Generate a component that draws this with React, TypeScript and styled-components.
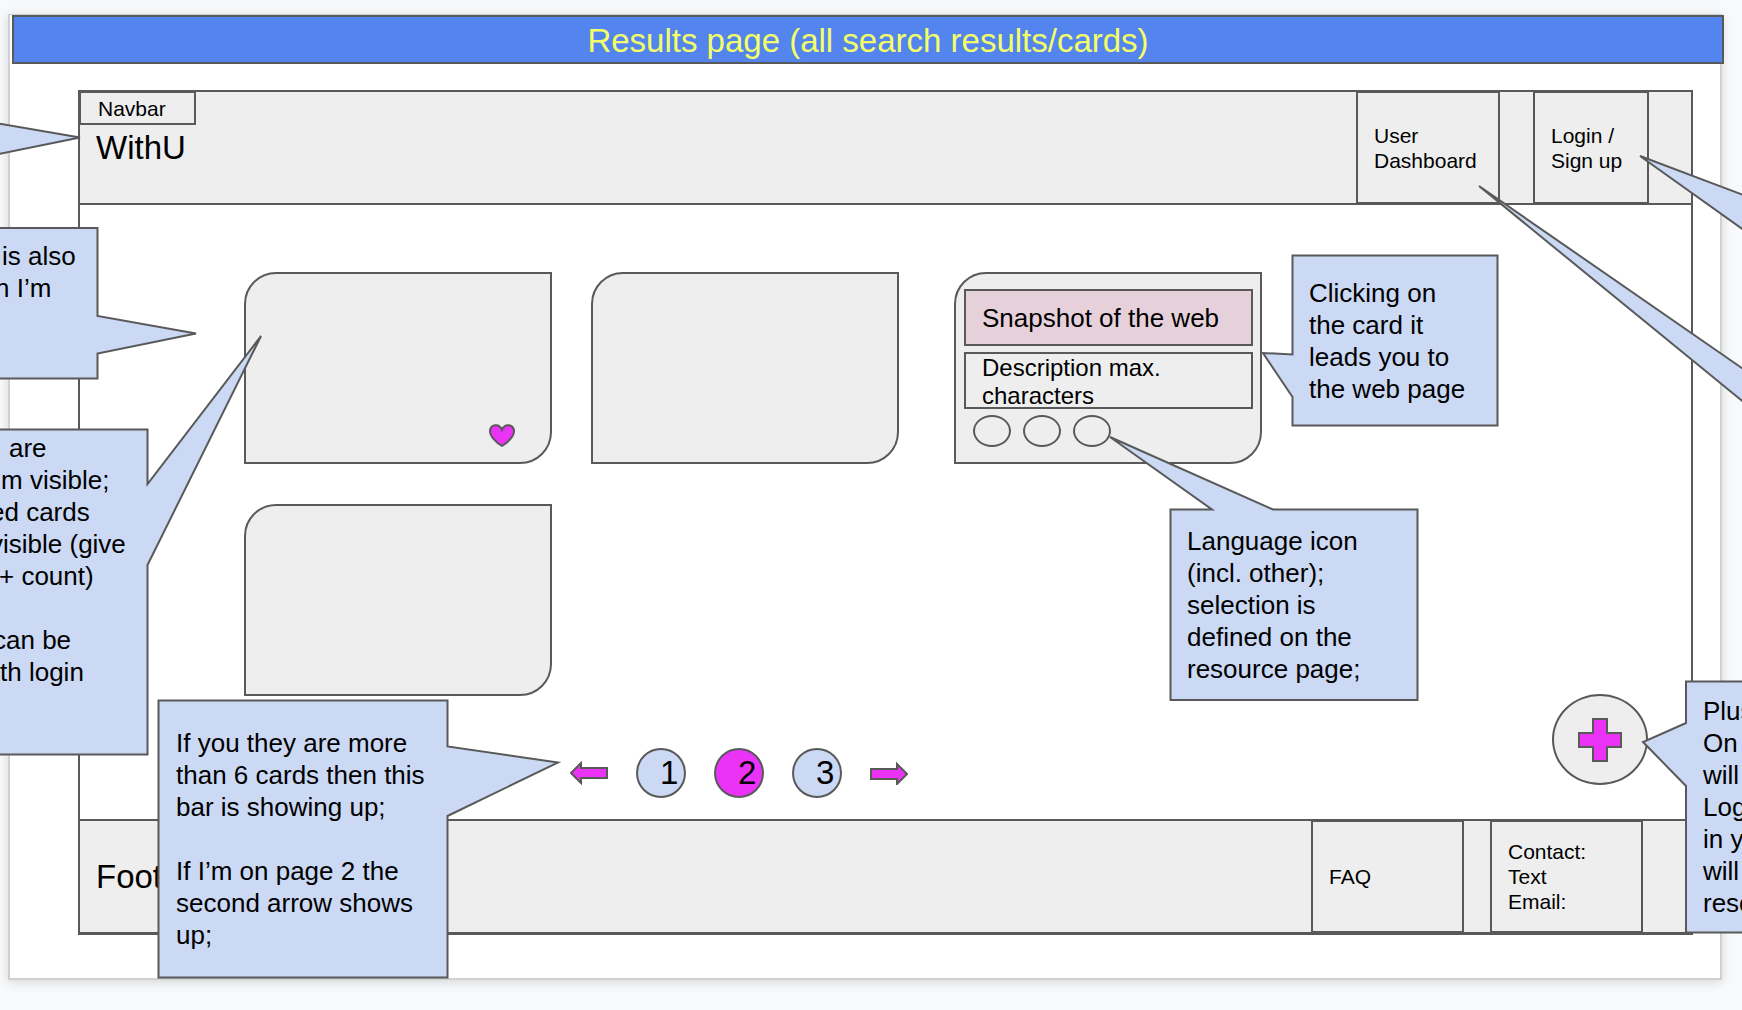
import React from "react";
import styled, { createGlobalStyle, css } from "styled-components";

const line = "#595959";
const grey = "#eeeeee";
const blue = "#cbd9f4";
const magenta = "#ea33f7";

const GlobalStyle = createGlobalStyle`
  *, *::before, *::after { box-sizing: border-box; }
  body {
    margin: 0;
    background: #f8f9fb;
    color: #000;
    font-family: "Liberation Sans", Arial, Helvetica, sans-serif;
  }
  h1, p, ul { margin: 0; padding: 0; font-weight: 400; }
  button { font: inherit; color: inherit; padding: 0; cursor: pointer; }
  a { color: inherit; text-decoration: none; }
`;

const Page = styled.div`
  position: relative;
  min-height: 100vh;
  overflow: hidden;
  padding: 14px 20px 30px 8px;
`;

const Sheet = styled.div`
  background: #fff;
  border: 2px solid #d0d0d0;
  border-top-width: 1px;
  box-shadow: 0 2px 10px rgba(0, 0, 0, 0.14);
  padding-bottom: 43px;
`;

const Title = styled.h1`
  && { padding-top: 2px; }
  margin: 0 -4px 0 2px;
  height: 49px;
  display: flex;
  align-items: center;
  justify-content: center;
  background: #5484ed;
  border: 2px solid ${line};
  color: #f3ff68;
  font-size: 33px;
  line-height: 38px;
`;

const Frame = styled.div`
  margin: 26px 27px 0 68px;
  border: 2px solid ${line};
  border-bottom-width: 3px;
`;

const bar = css`
  display: flex;
  align-items: center;
  height: 113px;
  padding-left: 16px;
  background: ${grey};
  font-size: 33px;
  line-height: 38px;
`;

const Header = styled.header`
  ${bar}
  position: relative;
  border-bottom: 2px solid ${line};
`;

const Footer = styled.footer`
  ${bar}
  border-top: 2px solid ${line};
`;

const Tag = styled.span`
  position: absolute;
  left: 0;
  top: 0;
  width: 116px;
  padding: 3px 0 2px 17px;
  border: solid ${line};
  border-width: 1px 2px 2px 1px;
  font-size: 21px;
  line-height: 25px;
`;

const Brand = styled.span`
  flex: 1;
`;

const Tabs = styled.nav<{ $gap: number; $end: number }>`
  display: flex;
  align-self: stretch;
  gap: ${(p) => p.$gap}px;
  margin-right: ${(p) => p.$end}px;
`;

const Tab = styled.a<{ $width: number }>`
  display: flex;
  align-items: center;
  width: ${(p) => p.$width}px;
  padding: 0 16px;
  border: solid ${line};
  border-width: 1px 2px;
  font-size: 21px;
  line-height: 25px;
  white-space: pre-line;
`;

const Main = styled.main`
  padding: 67px 43px 21px 164px;
`;

const Cards = styled.div`
  display: grid;
  grid-template-columns: 347px 363px 308px;
  row-gap: 40px;
`;

const Card = styled.article`
  width: 308px;
  height: 192px;
  display: flex;
  flex-direction: column;
  gap: 6px;
  padding: 15px 7px 0 8px;
  background: ${grey};
  border: 2px solid ${line};
  border-radius: 32px 0 32px 0;
`;

const Favourite = styled.button`
  margin: auto 28px 15px auto;
  height: 23px;
  border: 0;
  background: none;
`;

const Snapshot = styled.div`
  height: 57px;
  padding-left: 16px;
  border: 2px solid ${line};
  background: #e6d1db;
  font-size: 26px;
  line-height: 54px;
`;

const Description = styled.p`
  && { padding-left: 16px; }
  height: 57px;
  border: 2px solid ${line};
  font-size: 24px;
  line-height: 28px;
`;

const Languages = styled.ul`
  display: flex;
  gap: 12px;
  && { padding-left: 9px; }
  list-style: none;
`;

const Language = styled.li`
  width: 38px;
  height: 32px;
  border: 2px solid ${line};
  border-radius: 50%;
`;

const Bottom = styled.div`
  display: flex;
  justify-content: space-between;
  align-items: flex-end;
  margin-top: -2px;
  padding-left: 326px;
`;

const Pager = styled.nav`
  display: flex;
  align-items: center;
  gap: 28px;
`;

const PageButton = styled.button<{ $current?: boolean }>`
  width: 50px;
  height: 50px;
  padding-left: 22px;
  border: 2px solid ${line};
  border-radius: 50%;
  background: ${(p) => (p.$current ? magenta : blue)};
  font-size: 33px;
  line-height: 46px;
  text-align: left;
`;

const ArrowButton = styled.button`
  height: 24px;
  border: 0;
  background: none;
`;

const AddButton = styled.button`
  display: flex;
  align-items: center;
  justify-content: center;
  align-self: flex-start;
  width: 96px;
  height: 91px;
  margin-bottom: 13px;
  border: 2px solid ${line};
  border-radius: 50%;
  background: ${grey};
`;

const Drawing = styled.svg`
  display: block;
  fill: ${magenta};
  stroke: ${line};
  stroke-width: 2;
`;

type Box = { x: number; y: number; w: number; h: number };

const Note = styled.aside<{ $box: Box }>`
  position: absolute;
  left: ${(p) => p.$box.x}px;
  top: ${(p) => p.$box.y}px;
  width: ${(p) => p.$box.w}px;
  height: ${(p) => p.$box.h}px;
  display: flex;
  flex-direction: column;
  justify-content: center;
  padding: 0 17px;
  font-size: 26px;
  line-height: 32px;
`;

const Outline = styled.svg`
  position: absolute;
  inset: 0;
  width: 100%;
  height: 100%;
  overflow: visible;
  fill: ${blue};
  stroke: ${line};
  stroke-width: 2;
  pointer-events: none;
`;

const NoteText = styled.p`
  position: relative;
  min-height: 32px;
  white-space: pre;
`;

const NoteLine = styled(NoteText)<{ $start: number }>`
  margin-left: ${(p) => p.$start}px;
`;

type Line = { text: string; start: number };

function Callout(props: { box: Box; shape: string; text?: string; lines?: Line[] }) {
  const { box, shape, text, lines } = props;
  return (
    <Note $box={box}>
      <Outline aria-hidden="true">
        <path d={shape} />
      </Outline>
      {text && <NoteText>{text}</NoteText>}
      {lines?.map((l, i) => (
        <NoteLine key={i} $start={l.start}>{l.text}</NoteLine>
      ))}
    </Note>
  );
}

const Arrow = ({ flip }: { flip?: boolean }) => (
  <Drawing width="38" height="24" viewBox="0 0 38 24">
    <path d={flip ? "M37 13 27 3V8H1V18H27V23Z" : "M1 12 11 2V7H37V17H11V22Z"} />
  </Drawing>
);

export default function App() {
  return (
    <Page>
      <GlobalStyle />
      <Sheet>
        <Title>Results page (all search results/cards)</Title>
        <Frame>
          <Header>
            <Tag>Navbar</Tag>
            <Brand>WithU</Brand>
            <Tabs $gap={33} $end={42}>
              <Tab href="#dashboard" $width={144}>{"User\nDashboard"}</Tab>
              <Tab href="#login" $width={116}>{"Login /\nSign up"}</Tab>
            </Tabs>
          </Header>
          <Main>
            <Cards>
              <Card>
                <Favourite aria-label="Favourite">
                  <Drawing width="26" height="23" viewBox="0 0 26 23">
                    <path d="M13 6C14.5 1.500 18 1 20 1.200C23.500 1.600 25 4.500 25 7.500C25 12 19 18.500 13 22C7 18.500 1 12 1 7.500C1 4.500 2.500 1.600 6 1.200C8 1 11.500 1.500 13 6Z" />
                  </Drawing>
                </Favourite>
              </Card>
              <Card />
              <Card>
                <Snapshot>Snapshot of the web</Snapshot>
                <Description>Description max. characters</Description>
                <Languages>
                  <Language />
                  <Language />
                  <Language />
                </Languages>
              </Card>
              <Card />
            </Cards>
            <Bottom>
              <Pager aria-label="Pages">
                <ArrowButton aria-label="Previous page"><Arrow /></ArrowButton>
                <PageButton>1</PageButton>
                <PageButton $current aria-current="page">2</PageButton>
                <PageButton>3</PageButton>
                <ArrowButton aria-label="Next page"><Arrow flip /></ArrowButton>
              </Pager>
              <AddButton aria-label="Add resource">
                <Drawing width="44" height="44" viewBox="0 0 44 44">
                  <path d="M15 1H29V15H43V29H29V43H15V29H1V15H15Z" />
                </Drawing>
              </AddButton>
            </Bottom>
          </Main>
          <Footer>
            <Brand>Footer</Brand>
            <Tabs as="div" $gap={26} $end={48}>
              <Tab href="#faq" $width={153}>FAQ</Tab>
              <Tab href="#contact" $width={153}>{"Contact:\nText\nEmail:"}</Tab>
            </Tabs>
          </Footer>
        </Frame>
      </Sheet>

      <Callout box={{ x: -40, y: 100, w: 20, h: 80 }} shape="M0 17 120 37.500 0 62Z" />
      <Callout
        box={{ x: -20, y: 228, w: 118, h: 151 }}
        shape="M0 0H117.500V88L216 105.500 117.500 125.500V150.500H0Z"
        lines={[
          { text: "is also", start: 5 },
          { text: "n I’m", start: -2 },
          { text: "", start: 0 },
          { text: "", start: 0 },
        ]}
      />
      <Callout
        box={{ x: -20, y: 429, w: 168, h: 325 }}
        shape="M0 .5H167.500V55L281 -93 167.500 136V325.500H0Z"
        lines={[
          { text: "are", start: 12 },
          { text: "m visible;", start: 4 },
          { text: "ed cards", start: -7 },
          { text: "visible (give", start: -7 },
          { text: "+ count)", start: 2 },
          { text: "", start: 0 },
          { text: "can be", start: -4 },
          { text: "th login", start: 3 },
          { text: "", start: 0 },
          { text: "", start: 0 },
        ]}
      />
      <Callout
        box={{ x: 159, y: 700, w: 288, h: 278 }}
        shape="M-.5 .5H288.500V46.500L399 62.500 288.500 116V277.500H-.5Z"
        text={"If you they are more\nthan 6 cards then this\nbar is showing up;\n\nIf I’m on page 2 the\nsecond arrow shows\nup;"}
      />
      <Callout
        box={{ x: 1292, y: 255, w: 206, h: 171 }}
        shape="M.5 .5H205.500V170.500H.5V142L-29 98 .5 99.500Z"
        text={"Clicking on\nthe card it\nleads you to\nthe web page"}
      />
      <Callout
        box={{ x: 1170, y: 509, w: 248, h: 191 }}
        shape="M.5 .5H42L-60 -72 103 .5H247.500V191H.5Z"
        text={"Language icon\n(incl. other);\nselection is\ndefined on the\nresource page;"}
      />
      <Callout box={{ x: 1762, y: 150, w: 20, h: 100 }} shape="M0 52 -122 6 0 93Z" />
      <Callout box={{ x: 1762, y: 360, w: 20, h: 80 }} shape="M0 22 -283 -174 0 57Z" />
      <Callout
        box={{ x: 1686, y: 681, w: 140, h: 251 }}
        shape="M0 .5H140V251.500H0V105L-43 61 0 42Z"
        text={"Plus\nOn\nwill\nLog\nin y\nwill\nreso"}
      />
    </Page>
  );
}
